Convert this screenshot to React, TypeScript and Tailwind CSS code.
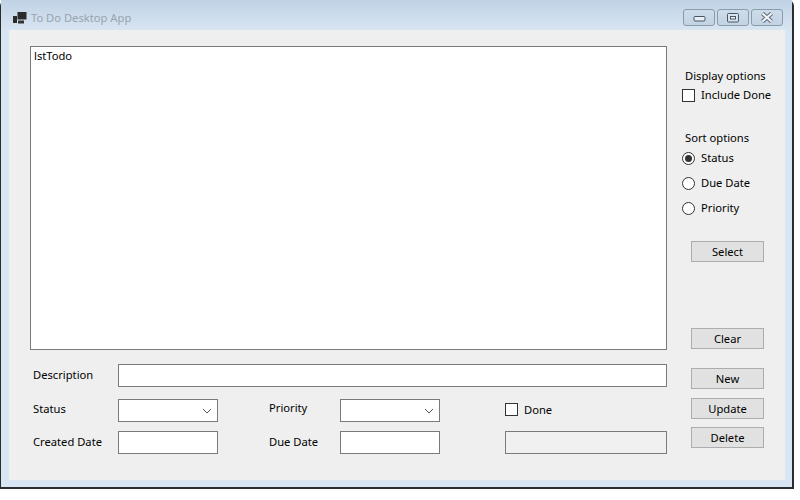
const font = "font-['Noto_Sans','Open_Sans',sans-serif]";

function Label({ children, className = "" }: { children: React.ReactNode; className?: string }) {
  return <span className={`block text-[11.2px] leading-[16px] text-black whitespace-nowrap ${className}`}>{children}</span>;
}

function Check({ label, className = "" }: { label: string; className?: string }) {
  return (
    <div className={`flex items-center gap-[6px] ${className}`}>
      <span className="w-[13px] h-[13px] border border-[#333] bg-white shrink-0" />
      <Label>{label}</Label>
    </div>
  );
}

function Radio({ label, on = false, className = "" }: { label: string; on?: boolean; className?: string }) {
  return (
    <div className={`flex items-center gap-[6px] ${className}`}>
      <span className="w-[13px] h-[13px] rounded-full border border-[#333] bg-white shrink-0 flex items-center justify-center">
        {on && <span className="w-[7px] h-[7px] rounded-full bg-[#333]" />}
      </span>
      <Label>{label}</Label>
    </div>
  );
}

function Btn({ label, className = "" }: { label: string; className?: string }) {
  return (
    <div className={`w-[73px] h-[21px] bg-[#e1e1e1] border border-[#adadad] flex items-center justify-center ${className}`}>
      <Label>{label}</Label>
    </div>
  );
}

function Combo() {
  return (
    <div className="w-[100px] h-[23px] bg-white border border-[#7a7a7a] flex items-center justify-end pr-[5px]">
      <svg width="10" height="6" viewBox="0 0 10 6" fill="none" stroke="#555" strokeWidth="1">
        <path d="M1 1l4 4 4-4" />
      </svg>
    </div>
  );
}

function Input({ className = "" }: { className?: string }) {
  return <div className={`h-[23px] bg-white border border-[#7a7a7a] ${className}`} />;
}

function Caption({ children }: { children: React.ReactNode }) {
  return (
    <div className="w-[32px] h-[17px] rounded-[3px] border border-[#8d9aa8] bg-gradient-to-b from-[#cddcea] to-[#c2d3e4] flex items-center justify-center">
      {children}
    </div>
  );
}

export default function App() {
  return (
    <div className={`w-[800px] h-[500px] bg-white overflow-hidden ${font}`}>
      <div className="w-[794px] h-[489px] rounded-t-[6px] border-b-2 border-r-2 border-l border-[#2a2d30] border-t-0 bg-[#d8e5f2] flex flex-col">
        <div className="h-[30px] shrink-0 bg-gradient-to-b from-[#bfd2e5] to-[#d8e5f2] flex items-start pt-[9px] pl-[11px] pr-[9px]">
          <svg width="15" height="14" viewBox="0 0 15 14" className="shrink-0 mt-[2px]">
            <rect x="5.5" y="1" width="9" height="7.5" fill="#2b2b2b" />
            <rect x="1" y="5" width="4" height="7" fill="#2b2b2b" />
            <rect x="6" y="9.5" width="6" height="3" fill="#333" />
          </svg>
          <span className="ml-[4px] mt-[1px] text-[11.2px] leading-[16px] text-[#9aa3ad]">To Do Desktop App</span>
          <div className="ml-auto flex gap-[2px]">
            <Caption>
              <svg width="13" height="6" viewBox="0 0 13 6" className="mt-[3px]">
                <rect x="1" y="0.5" width="11" height="4.5" rx="1" fill="#e8eef4" stroke="#4a5560" />
              </svg>
            </Caption>
            <Caption>
              <svg width="12" height="10" viewBox="0 0 12 10">
                <rect x="0.5" y="0.5" width="11" height="8.5" rx="1" fill="#d6e2ee" stroke="#4a5560" />
                <rect x="3.5" y="3.5" width="5" height="2.5" fill="#eef3f8" stroke="#4a5560" />
              </svg>
            </Caption>
            <Caption>
              <svg width="14" height="11" viewBox="0 0 14 11" fill="none">
                <path d="M2.5 1.5l9 8M11.5 1.5l-9 8" stroke="#5f6c79" strokeWidth="4.2" />
                <path d="M2.5 1.5l9 8M11.5 1.5l-9 8" stroke="#f1f4f7" strokeWidth="2.2" />
              </svg>
            </Caption>
          </div>
        </div>
        <div className="ml-[8px] w-[776px] h-[450px] bg-[#efefef] pl-[21px] pt-[16px] flex gap-[15px]">
          <div className="w-[637px] flex flex-col">
            <div className="h-[304px] bg-white border border-[#7a7a7a] px-[3px] py-[1px]">
              <Label>lstTodo</Label>
            </div>
            <div className="mt-[14px] flex items-center">
              <Label className="w-[88px] pl-[3px] -mt-[2px]">Description</Label>
              <Input className="flex-1" />
            </div>
            <div className="mt-[12px] flex items-center">
              <Label className="w-[88px] pl-[3px] -mt-[4px]">Status</Label>
              <Combo />
              <Label className="w-[122px] pl-[51px] -mt-[6px]">Priority</Label>
              <Combo />
              <Check label="Done" className="ml-[65px] -mt-[2px]" />
            </div>
            <div className="mt-[9px] flex items-center">
              <Label className="w-[88px] pl-[3px] -mt-[2px]">Created Date</Label>
              <Input className="w-[100px]" />
              <Label className="w-[122px] pl-[51px] -mt-[2px]">Due Date</Label>
              <Input className="w-[100px]" />
              <div className="ml-[65px] w-[162px] h-[23px] bg-[#f0f0f0] border border-[#7a7a7a]" />
            </div>
          </div>
          <div className="w-[92px] flex flex-col">
            <Label className="ml-[3px] mt-[22px]">Display options</Label>
            <Check label="Include Done" className="mt-[3px]" />
            <Label className="ml-[3px] mt-[27px]">Sort options</Label>
            <Radio label="Status" on className="mt-[4px]" />
            <Radio label="Due Date" className="mt-[9px]" />
            <Radio label="Priority" className="mt-[9px]" />
            <Btn label="Select" className="ml-[9px] mt-[25px]" />
            <Btn label="Clear" className="ml-[9px] mt-[66px]" />
            <Btn label="New" className="ml-[9px] mt-[19px]" />
            <Btn label="Update" className="ml-[9px] mt-[9px]" />
            <Btn label="Delete" className="ml-[9px] mt-[8px]" />
          </div>
        </div>
      </div>
    </div>
  );
}
